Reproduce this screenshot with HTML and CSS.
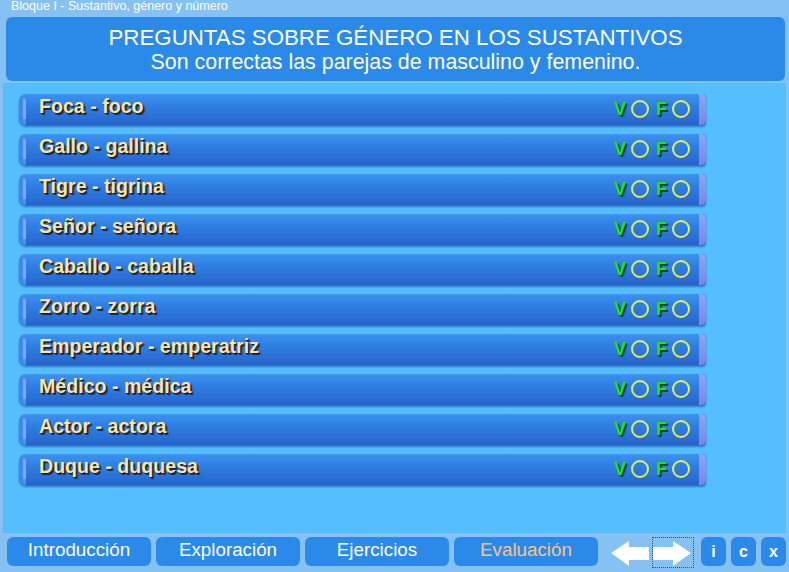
FILE: index.html
```html
<!DOCTYPE html>
<html lang="es">
<head>
<meta charset="utf-8">
<title>Bloque I - Sustantivo, género y número</title>
<link rel="stylesheet" href="styles.css">
</head>
<body>
<div class="app">
  <div class="topbar">Bloque I - Sustantivo, género y número</div>
  <div class="title">
    <div class="t1">PREGUNTAS SOBRE GÉNERO EN LOS SUSTANTIVOS</div>
    <div class="t2">Son correctas las parejas de masculino y femenino.</div>
  </div>
  <div class="panel">
    <div class="row"><span class="cap-l"></span><span class="label">Foca - foco</span><span class="vf"><b class="v">V</b><i class="dot"></i><b class="f">F</b><i class="dot"></i></span><span class="cap-r"></span></div>
    <div class="row"><span class="cap-l"></span><span class="label">Gallo - gallina</span><span class="vf"><b class="v">V</b><i class="dot"></i><b class="f">F</b><i class="dot"></i></span><span class="cap-r"></span></div>
    <div class="row"><span class="cap-l"></span><span class="label">Tigre - tigrina</span><span class="vf"><b class="v">V</b><i class="dot"></i><b class="f">F</b><i class="dot"></i></span><span class="cap-r"></span></div>
    <div class="row"><span class="cap-l"></span><span class="label">Señor - señora</span><span class="vf"><b class="v">V</b><i class="dot"></i><b class="f">F</b><i class="dot"></i></span><span class="cap-r"></span></div>
    <div class="row"><span class="cap-l"></span><span class="label">Caballo - caballa</span><span class="vf"><b class="v">V</b><i class="dot"></i><b class="f">F</b><i class="dot"></i></span><span class="cap-r"></span></div>
    <div class="row"><span class="cap-l"></span><span class="label">Zorro - zorra</span><span class="vf"><b class="v">V</b><i class="dot"></i><b class="f">F</b><i class="dot"></i></span><span class="cap-r"></span></div>
    <div class="row"><span class="cap-l"></span><span class="label">Emperador - emperatriz</span><span class="vf"><b class="v">V</b><i class="dot"></i><b class="f">F</b><i class="dot"></i></span><span class="cap-r"></span></div>
    <div class="row"><span class="cap-l"></span><span class="label">Médico - médica</span><span class="vf"><b class="v">V</b><i class="dot"></i><b class="f">F</b><i class="dot"></i></span><span class="cap-r"></span></div>
    <div class="row"><span class="cap-l"></span><span class="label">Actor - actora</span><span class="vf"><b class="v">V</b><i class="dot"></i><b class="f">F</b><i class="dot"></i></span><span class="cap-r"></span></div>
    <div class="row"><span class="cap-l"></span><span class="label">Duque - duquesa</span><span class="vf"><b class="v">V</b><i class="dot"></i><b class="f">F</b><i class="dot"></i></span><span class="cap-r"></span></div>
  </div>
  <div class="nav">
    <div class="tab">Introducción</div>
    <div class="tab">Exploración</div>
    <div class="tab">Ejercicios</div>
    <div class="tab active">Evaluación</div>
    <div class="arrows">
      <span class="arrow">
        <svg width="40" height="28" viewBox="0 0 40 28"><polygon points="1,14 19,2 19,8 39,8 39,21 19,21 19,27" fill="#ffffff"/></svg>
      </span>
      <span class="arrow focus">
        <svg width="40" height="28" viewBox="0 0 40 28"><polygon points="39,14 21,2 21,8 1,8 1,21 21,21 21,27" fill="#ffffff"/></svg>
      </span>
    </div>
    <div class="btn">i</div>
    <div class="btn">c</div>
    <div class="btn">x</div>
  </div>
</div>
</body>
</html>
```
FILE: styles.css
```css
html, body {
  margin: 0;
  padding: 0;
}
body {
  width: 789px;
  height: 572px;
  background: #85c2f3;
  font-family: "Liberation Sans", Arial, sans-serif;
  overflow: hidden;
}
.app {
  display: flex;
  flex-direction: column;
  height: 572px;
}
.topbar {
  height: 17px;
  line-height: 13px;
  padding-left: 11px;
  font-size: 12.5px;
  color: #ffffff;
}
.title {
  margin: 0 4px 0 6px;
  height: 64px;
  background: #2b8ae9;
  border-radius: 6px;
  color: #ffffff;
  text-align: center;
  box-sizing: border-box;
  padding-top: 8px;
  line-height: 25px;
}
.t1 {
  font-size: 22.3px;
}
.t2 {
  font-size: 21.4px;
}
.panel {
  margin: 2px 3px 0 3px;
  height: 450px;
  background: #55beff;
  box-sizing: border-box;
  padding: 11px 0 0 16px;
  display: flex;
  flex-direction: column;
  gap: 9px;
}
.row {
  width: 687px;
  height: 31px;
  display: flex;
  align-items: stretch;
  border-radius: 7px 4px 4px 7px;
  background: linear-gradient(#3f92f0 0%, #2f80e4 35%, #2a70d6 75%, #2562c6 100%);
  box-shadow: 0 2px 2px rgba(20, 60, 140, 0.55);
}
.cap-l {
  width: 7px;
  flex: none;
  border-radius: 7px 0 0 7px;
  background: linear-gradient(90deg, #3d86e6 0%, #4a8ff0 100%);
  position: relative;
}
.cap-l::after {
  content: "";
  position: absolute;
  left: 4px;
  top: 5px;
  bottom: 6px;
  width: 3px;
  background: #7aa8ff;
}
.label {
  flex: 1;
  padding-left: 13px;
  padding-top: 1px;
  font-weight: bold;
  font-size: 19.6px;
  line-height: 22px;
  color: #ffe4a6;
  text-shadow: 1px 1px 0 #1a1a2a, 2px 2px 1px rgba(0, 0, 0, 0.6);
}
.vf {
  display: flex;
  align-items: center;
  gap: 5px;
  padding-right: 9px;
  padding-bottom: 2px;
}
.vf b {
  font-size: 18px;
  font-weight: bold;
  color: #1ee61e;
  text-shadow: 1px 1px 0 #064010, 2px 2px 0 rgba(0, 0, 0, 0.5);
  line-height: 18px;
}
.vf .f {
  margin-left: 2px;
}
.dot {
  width: 14px;
  height: 14px;
  border: 2px solid #e4f24a;
  border-radius: 50%;
  display: block;
}
.cap-r {
  width: 7px;
  flex: none;
  border-radius: 0 5px 5px 0;
  background: linear-gradient(#93a4f6, #7686e6);
}
.nav {
  display: flex;
  align-items: flex-start;
  gap: 5px;
  padding: 4px 0 0 7px;
}
.tab {
  width: 144px;
  height: 29px;
  background: #2b8ae9;
  border-radius: 6px;
  color: #ffffff;
  font-size: 18.8px;
  text-align: center;
  line-height: 26px;
}
.tab.active {
  color: #f8c48a;
}
.arrows {
  display: flex;
  gap: 2px;
  margin-left: 7px;
  margin-right: 2px;
}
.arrow {
  display: flex;
  align-items: center;
  height: 31px;
  padding-top: 1px;
  box-sizing: border-box;
}
.arrow.focus {
  outline: 1px dotted #3a4a70;
  outline-offset: -1px;
  width: 42px;
  justify-content: flex-start;
}
.btn {
  width: 25px;
  height: 29px;
  background: #2b8ae9;
  border-radius: 6px;
  color: #ffffff;
  font-weight: bold;
  font-size: 16px;
  text-align: center;
  line-height: 29px;
}
```
